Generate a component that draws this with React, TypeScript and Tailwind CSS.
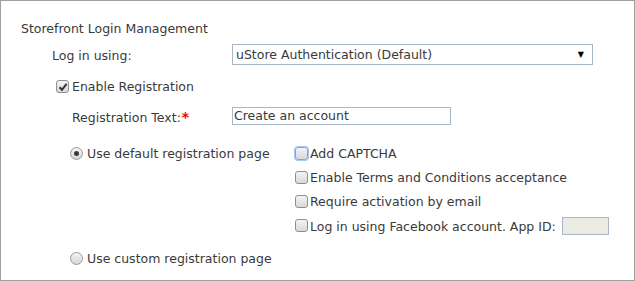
import React from "react";

function Box({ checked = false, focus = false }: { checked?: boolean; focus?: boolean }) {
  return (
    <span
      className={
        "relative inline-block w-[13px] h-[13px] rounded-[3px] border bg-gradient-to-b from-[#f4f4f4] to-[#d8d8d8] shrink-0 " +
        (focus ? "border-[#7aa7e8] shadow-[0_0_0_1px_#a9c6f0]" : "border-[#8f8f8f]")
      }
    >
      {checked && (
        <svg className="absolute left-[1px] top-[1px]" width="10" height="10" viewBox="0 0 10 10">
          <path d="M1.5 5.2 L4 7.8 L8.6 1.8" fill="none" stroke="#333" strokeWidth="2" />
        </svg>
      )}
    </span>
  );
}

function Radio({ checked = false }: { checked?: boolean }) {
  return (
    <span className="relative inline-flex items-center justify-center w-[13px] h-[13px] rounded-full border border-[#9a9a9a] bg-gradient-to-b from-[#f4f4f4] to-[#d6d6d6] shrink-0">
      {checked && <span className="block w-[5px] h-[5px] rounded-full bg-[#3a3a3a]" />}
    </span>
  );
}

export default function App() {
  return (
    <div
      className="w-[635px] h-[281px] border border-[#a0a0a0] bg-white text-[#3a3a3a] text-[12.5px] leading-[16px] pt-[20px] flex flex-col"
      style={{ fontFamily: '"DejaVu Sans", Verdana, sans-serif' }}
    >
      <div className="h-[16px] pl-[20px] flex items-center">Storefront Login Management</div>

      <div className="mt-[7px] h-[21px] flex items-center">
        <span className="pl-[51px] w-[231px] pt-[3px]">Log in using:</span>
        <div className="w-[361px] h-[21px] border border-[#a9b6c6] flex items-center justify-between pl-[3px] pr-[8px]">
          <span>uStore Authentication (Default)</span>
          <span className="text-[8px] text-black">▼</span>
        </div>
      </div>

      <div className="mt-[13px] h-[16px] flex items-center pl-[55px] gap-[3px]">
        <Box checked />
        <span className="pt-[2px]">Enable Registration</span>
      </div>

      <div className="mt-[13px] h-[18px] flex items-center">
        <span className="pl-[71px] w-[231px] pt-[2px]">
          Registration Text:<span className="text-[#e00] ml-[1px] font-bold text-[14px]">*</span>
        </span>
        <div className="w-[219px] h-[18px] border border-[#a9b6c6] flex items-center pl-[1px]">Create an account</div>
      </div>

      <div className="mt-[16px] flex">
        <div className="w-[294px] pl-[69px] h-[24px] flex items-center gap-[4px]">
          <Radio checked />
          <span className="pt-[2px]">Use default registration page</span>
        </div>
        <div className="flex flex-col">
          <div className="h-[24px] flex items-center gap-[2px]">
            <Box focus />
            <span className="pt-[2px]">Add CAPTCHA</span>
          </div>
          <div className="h-[24px] flex items-center gap-[2px]">
            <Box />
            <span className="pt-[2px]">Enable Terms and Conditions acceptance</span>
          </div>
          <div className="h-[24px] flex items-center gap-[2px]">
            <Box />
            <span className="pt-[2px]">Require activation by email</span>
          </div>
          <div className="h-[25px] flex items-center gap-[2px]">
            <Box />
            <span className="pt-[2px]">Log in using Facebook account. App ID:</span>
            <span className="ml-[4px] w-[47px] h-[18px] border border-[#a9b6c6] bg-[#ebebe4]" />
          </div>
        </div>
      </div>

      <div className="mt-[12px] h-[16px] flex items-center pl-[69px] gap-[4px]">
        <Radio />
        <span className="pt-[2px]">Use custom registration page</span>
      </div>
    </div>
  );
}
